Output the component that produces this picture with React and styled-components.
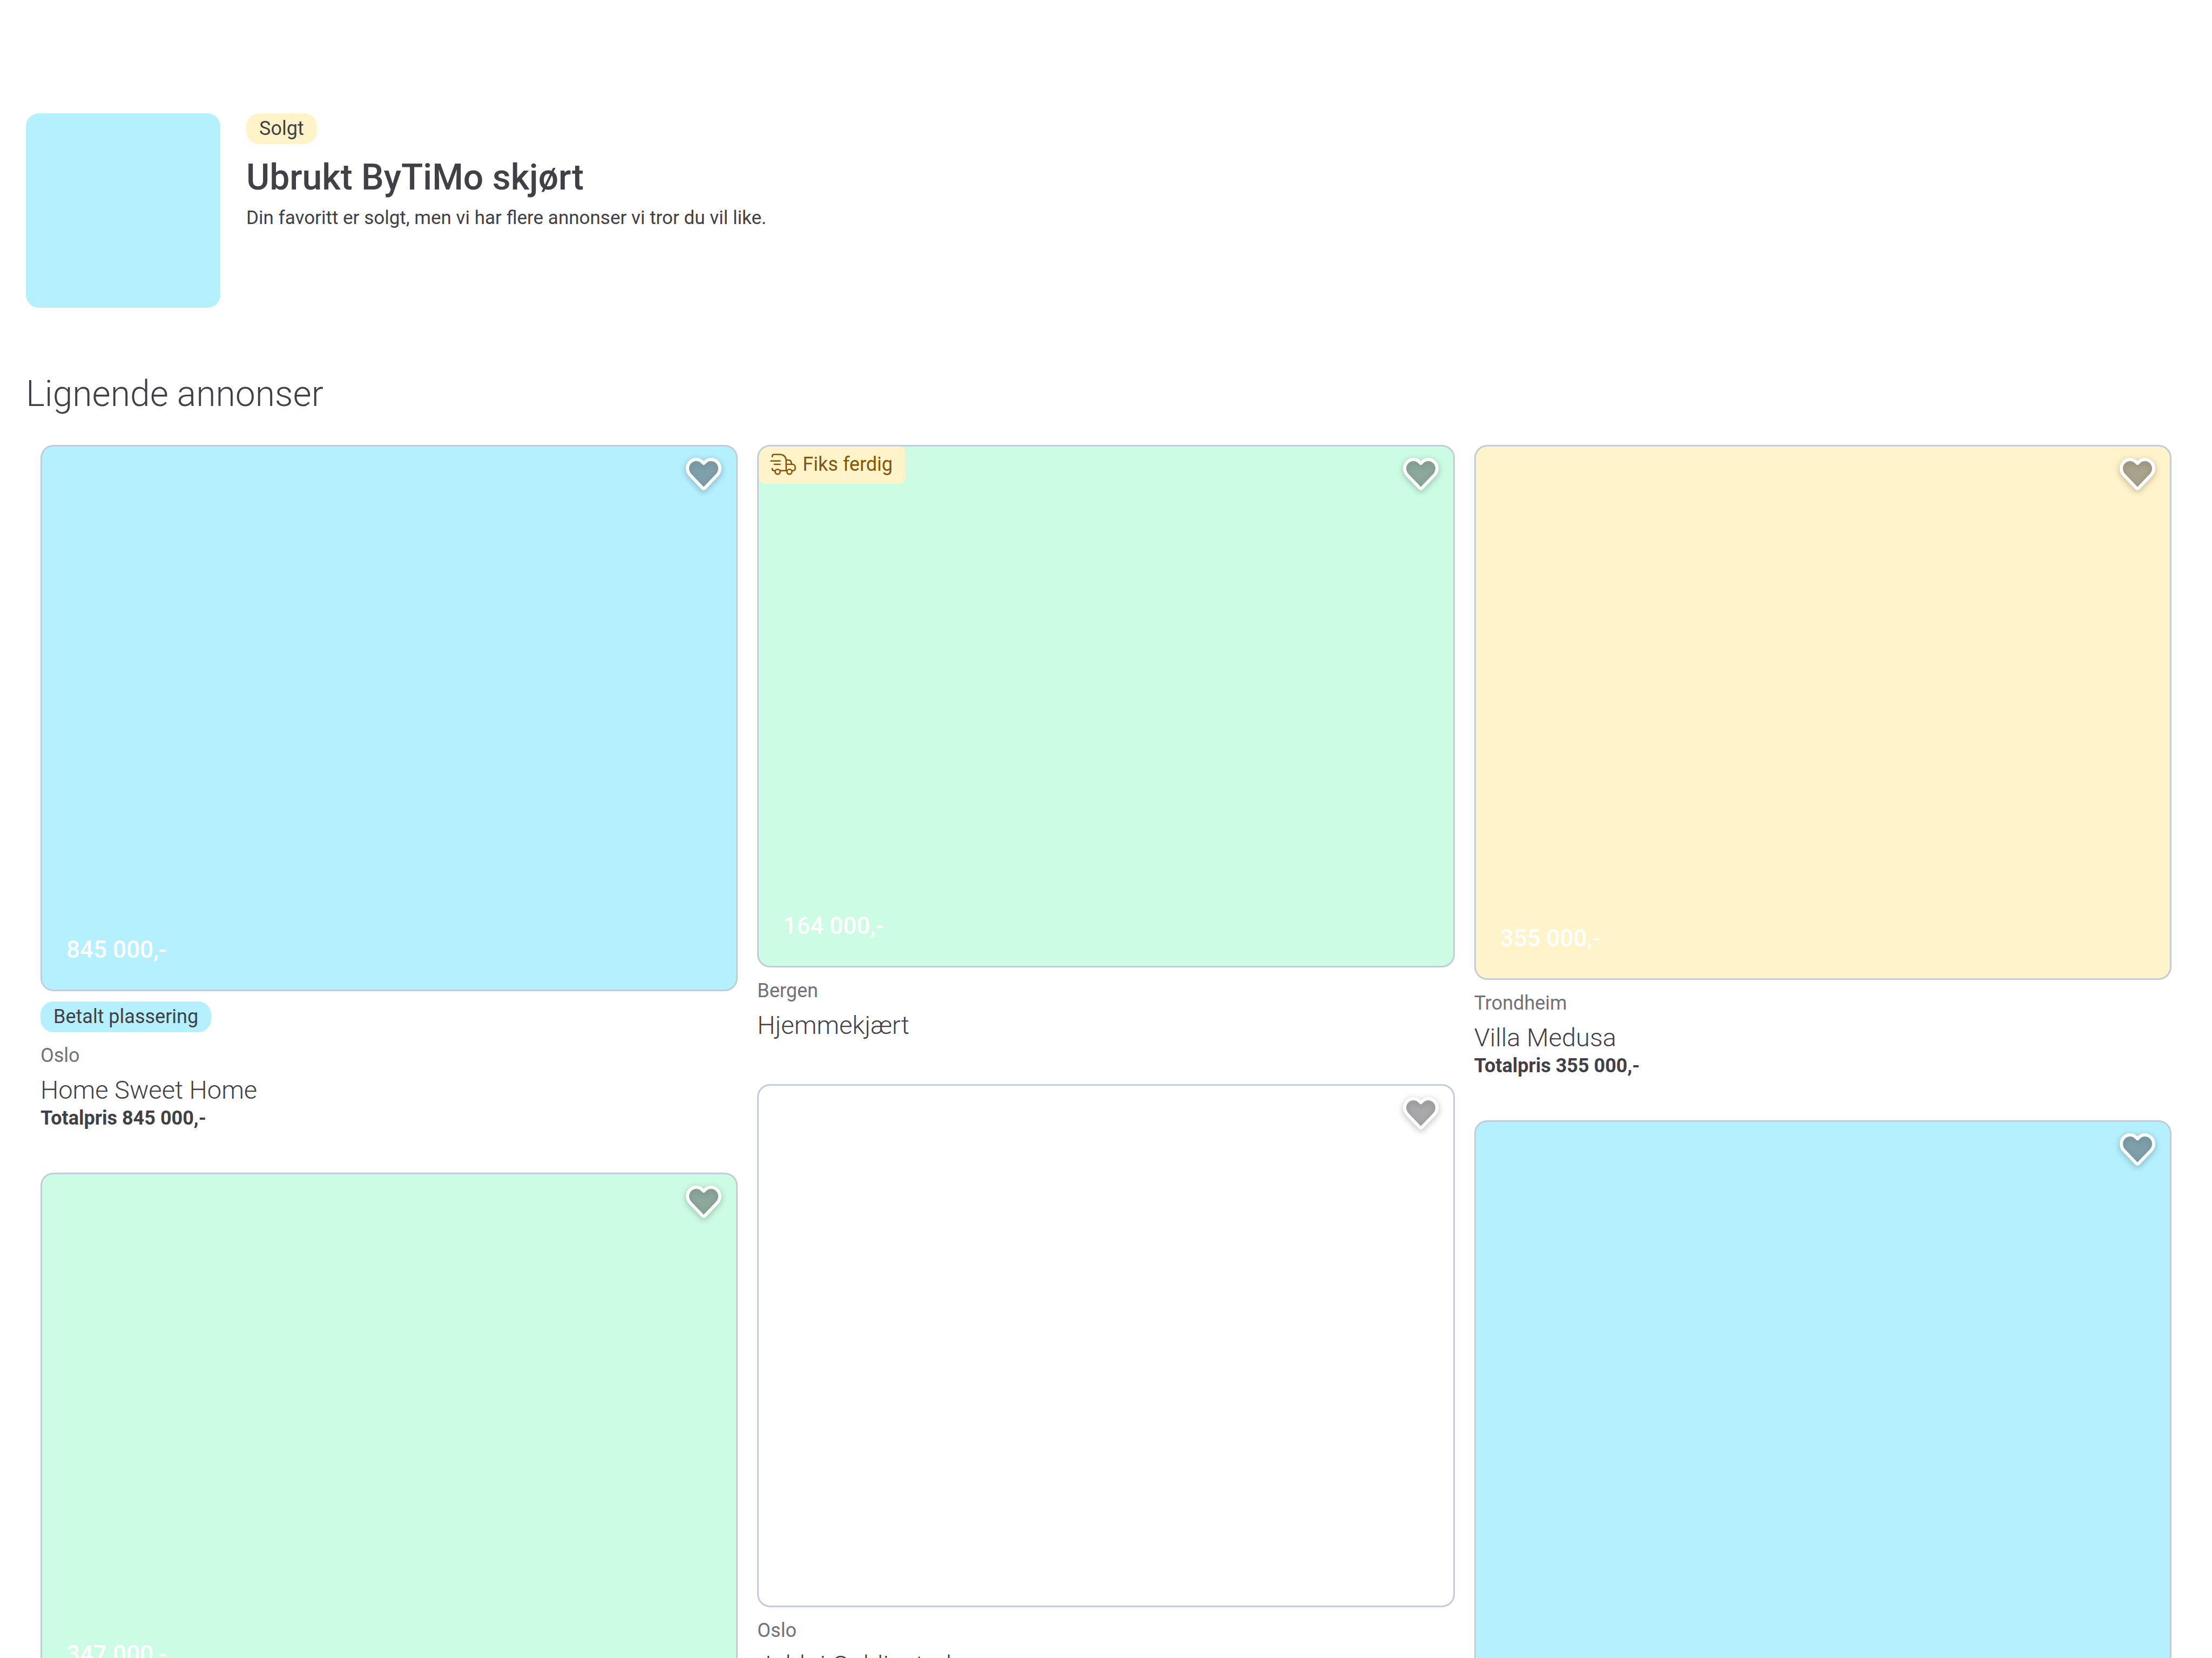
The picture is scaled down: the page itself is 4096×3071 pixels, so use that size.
import React, { useState } from "react";
import styled, { createGlobalStyle } from "styled-components";

const colors = {
  text: "#404046",
  subtle: "#71717b",
  border: "#c3ccd9",
  blue: "#b5f0ff",
  green: "#ccfde4",
  yellow: "#fff4c9",
  white: "#ffffff",
  brown: "#885407",
};

const GlobalStyle = createGlobalStyle`
  html {
    scrollbar-width: none;
  }
  body {
    margin: 0;
    background: #fff;
    color: ${colors.text};
    font-family: Roboto, "Liberation Sans", sans-serif;
    font-size: 36px;
    line-height: 48px;
  }
  *, *::before, *::after {
    box-sizing: border-box;
  }
`;

const Page = styled.main`
  padding: 210px 48px 0;
`;

const SoldAd = styled.section`
  display: flex;
  gap: 48px;
  margin-bottom: 120px;
`;

const Thumbnail = styled.div`
  flex: none;
  width: 360px;
  height: 360px;
  border-radius: 24px;
  background: ${colors.blue};
`;

const SoldInfo = styled.div`
  display: flex;
  flex-direction: column;
  align-items: flex-start;
`;

const Badge = styled.span`
  display: block;
  width: fit-content;
  padding: 4px 24px 5px;
  border-radius: 24px;
  background: ${(p) => colors[p.$tone]};
`;

const SoldTitle = styled.h1`
  margin: 22px 0 11px;
  font-size: 66px;
  line-height: 80px;
  font-weight: 500;
`;

const SoldText = styled.p`
  margin: 0;
  font-size: 35px;
`;

const SectionTitle = styled.h2`
  margin: 0 0 54px;
  font-size: 66px;
  line-height: 80px;
  font-weight: 300;
`;

const Grid = styled.div`
  display: grid;
  grid-template-columns: repeat(3, minmax(0, 1fr));
  align-items: start;
  gap: 36px;
  padding: 0 27px;
`;

const Column = styled.div`
  display: flex;
  flex-direction: column;
  gap: 79px;
`;

const Card = styled.article`
  display: flex;
  flex-direction: column;
`;

const Picture = styled.div`
  position: relative;
  aspect-ratio: ${(p) => p.$ratio};
  overflow: hidden;
  border: 3px solid ${colors.border};
  border-radius: 24px;
  background: ${(p) => colors[p.$tone]};
`;

const Price = styled.span`
  position: absolute;
  left: 45px;
  bottom: 47px;
  color: #fff;
  font-size: 44px;
  line-height: 54px;
  font-weight: 500;
`;

const Shipping = styled.span`
  position: absolute;
  top: 0;
  left: 0;
  display: flex;
  align-items: center;
  gap: 12px;
  padding: 9px 24px 12px 21px;
  border-radius: 0 12px 12px 12px;
  background: ${colors.yellow};
  color: ${colors.brown};
`;

const FavoriteButton = styled.button`
  position: absolute;
  top: 21px;
  right: 27px;
  display: block;
  padding: 0;
  border: 0;
  background: none;
  cursor: pointer;

  svg {
    display: block;
    overflow: visible;
    filter: drop-shadow(0 3px 6px rgba(0, 0, 0, 0.3));
  }
`;

const Details = styled.div`
  display: flex;
  flex-direction: column;
  gap: 19px;
  padding-top: 19px;
`;

const Lines = styled.div`
  display: flex;
  flex-direction: column;
`;

const Location = styled.span`
  margin-bottom: 10px;
  color: ${colors.subtle};
`;

const CardTitle = styled.a`
  color: inherit;
  font-size: 47px;
  line-height: 60px;
  font-weight: 300;
  text-decoration: none;
`;

const Total = styled.span`
  line-height: 44px;
  font-weight: 700;
`;

function Heart({ active }) {
  return (
    <svg width="66" height="60" viewBox="0 0 66 60" aria-hidden="true">
      <path
        d="M33 10.2L29.6 7C26.6 4.2 23 3 19.4 3C10.4 3 3 10.4 3 19.6C3 24.2 4.8 28.6 8 32L31 56C32.2 57.3 33.8 57.3 35 56L58 32C61.2 28.6 63 24.2 63 19.6C63 10.4 55.6 3 46.6 3C43 3 39.4 4.2 36.4 7Z"
        fill={active ? "#e12424" : "#404046"}
        fillOpacity={active ? 1 : 0.36}
        stroke="#fff"
        strokeWidth="6"
        strokeLinejoin="round"
      />
    </svg>
  );
}

function Truck() {
  return (
    <svg
      width="48"
      height="48"
      viewBox="0 0 48 48"
      fill="none"
      stroke="currentColor"
      strokeWidth="2.6"
      strokeLinecap="round"
      strokeLinejoin="round"
      aria-hidden="true"
    >
      <path d="M4 10V9C4 7.2 5.2 5.8 7 5.8H18.5C25 5.8 29.8 10.5 29.8 17V35.8" />
      <path d="M1.5 17.7H18.5M7.8 24H18.5" />
      <path d="M4 31.8V32.8C4 34.6 5.2 35.8 7 35.8H9.2M18.8 35.8H30.8" />
      <path d="M29.8 16.3H34.6C37 16.3 38.4 17.6 39 19.6L40.2 24" />
      <path d="M29.8 24H41C44.4 24 46.5 26.4 46.5 29.6V31.6C46.5 34 44.8 35.8 42.4 35.8H40.6" />
      <circle cx="14" cy="37.8" r="4.6" />
      <circle cx="35.8" cy="37.8" r="4.6" />
    </svg>
  );
}

function AdCard({ ad }) {
  const [active, setActive] = useState(false);
  return (
    <Card>
      <Picture $tone={ad.tone} $ratio={ad.ratio}>
        {ad.shipping && (
          <Shipping>
            <Truck />
            Fiks ferdig
          </Shipping>
        )}
        <FavoriteButton
          type="button"
          aria-label="Legg til favoritt"
          aria-pressed={active}
          onClick={() => setActive(!active)}
        >
          <Heart active={active} />
        </FavoriteButton>
        {ad.price && <Price>{ad.price}</Price>}
      </Picture>
      {ad.title && (
        <Details>
          {ad.paid && <Badge $tone="blue">Betalt plassering</Badge>}
          <Lines>
            <Location>{ad.location}</Location>
            <CardTitle href="#">{ad.title}</CardTitle>
            {ad.total && <Total>Totalpris {ad.total}</Total>}
          </Lines>
        </Details>
      )}
    </Card>
  );
}

const columns = [
  [
    { tone: "blue", ratio: "1292 / 1013", price: "845 000,-", paid: true, location: "Oslo", title: "Home Sweet Home", total: "845 000,-" },
    { tone: "green", ratio: "4 / 3", price: "347 000,-" },
  ],
  [
    { tone: "green", ratio: "4 / 3", price: "164 000,-", shipping: true, location: "Bergen", title: "Hjemmekjært" },
    { tone: "white", ratio: "4 / 3", location: "Oslo", title: "Jobb i Goblinstad" },
  ],
  [
    { tone: "yellow", ratio: "1292 / 992", price: "355 000,-", location: "Trondheim", title: "Villa Medusa", total: "355 000,-" },
    { tone: "blue", ratio: "1 / 1" },
  ],
];

export default function App() {
  return (
    <>
      <GlobalStyle />
      <Page>
        <SoldAd>
          <Thumbnail />
          <SoldInfo>
            <Badge $tone="yellow">Solgt</Badge>
            <SoldTitle>Ubrukt ByTiMo skjørt</SoldTitle>
            <SoldText>Din favoritt er solgt, men vi har flere annonser vi tror du vil like.</SoldText>
          </SoldInfo>
        </SoldAd>
        <SectionTitle>Lignende annonser</SectionTitle>
        <Grid>
          {columns.map((ads, i) => (
            <Column key={i}>
              {ads.map((ad, j) => (
                <AdCard key={j} ad={ad} />
              ))}
            </Column>
          ))}
        </Grid>
      </Page>
    </>
  );
}
